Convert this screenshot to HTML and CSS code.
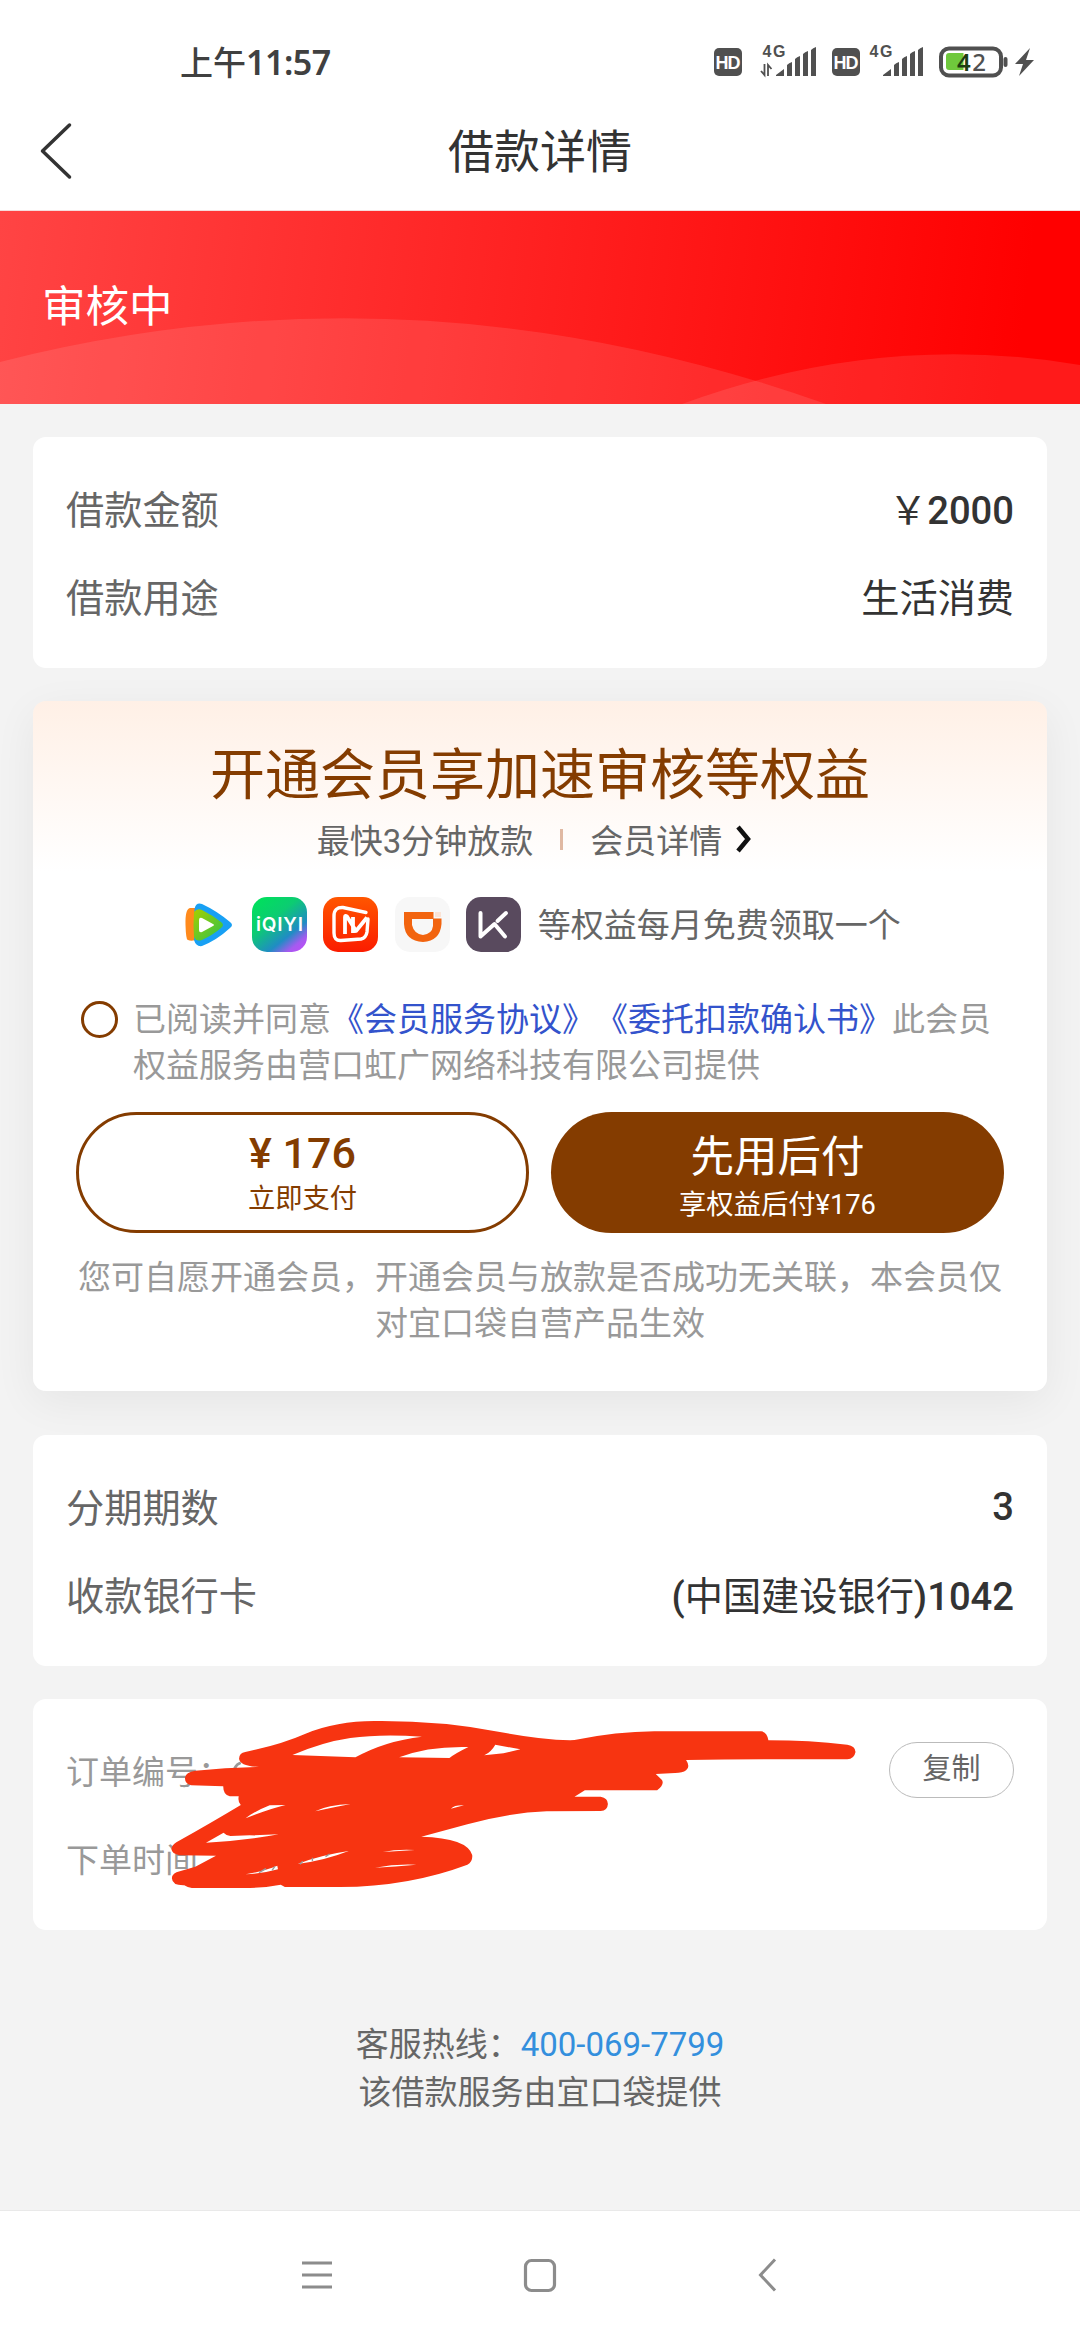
FILE: index.html
```html
<!DOCTYPE html>
<html lang="zh-CN">
<head>
<meta charset="utf-8">
<title>借款详情</title>
<link rel="stylesheet" href="styles.css">
</head>
<body>
<div class="screen">
  <header class="top">
    <div class="status">
      <span class="clock">上午<span class="clock-num">11:57</span></span>
      <svg class="status-icons" width="330" height="40" viewBox="710 40 330 40">
        <g fill="#505050">
          <rect x="714" y="48" width="28" height="28" rx="5"/>
          <rect x="832" y="48" width="28" height="28" rx="5"/>
          <g id="bars">
            <path d="M776 76v-1l8-6v7zM787 76V65q2-2 5-3v14zM795 76V59q2-2 5-3v20zM803 76V54q2-2 5-3v25zM811 76V50q2-2 5-3v29z"/>
          </g>
          <use href="#bars" x="107"/>
          <rect x="1003.500" y="57" width="4" height="10" rx="2"/>
          <path d="M1030 48l-15 16h8l-4 12 15-16h-8z"/>
        </g>
        <path d="M764.500 64v11l-3.500-4M768 76V65l3.500 4" fill="none" stroke="#505050" stroke-width="1.800"/>
        <rect x="941" y="48.500" width="60" height="27" rx="8" fill="#fff" stroke="#505050" stroke-width="4"/>
        <path d="M949 53h14.500v17H949q-3 0-3-3V56q0-3 3-3z" fill="#6fc83c"/>
        <g class="hd"><text x="715.500" y="69" textLength="25">HD</text><text x="833.500" y="69" textLength="25">HD</text></g>
        <g class="net"><text x="762.500" y="57" textLength="23">4G</text><text x="869.500" y="57" textLength="23">4G</text></g>
        <text class="bat" x="957" y="71"><tspan fill="#1d3c10" font-weight="600">4</tspan><tspan dx="1.500">2</tspan></text>
      </svg>
    </div>
    <div class="titlebar">
      <svg class="back" width="36" height="60" viewBox="0 0 36 60"><path d="M31.500 3L4.500 29l27 26" fill="none" stroke="#333" stroke-width="3.500" stroke-linecap="round" stroke-linejoin="round"/></svg>
      <h1 class="title">借款详情</h1>
    </div>
  </header>

  <section class="banner">
    <svg class="waves" width="1080" height="193" viewBox="0 211 1080 193">
      <path d="M0 362Q413 257 826 404H0z" fill="#fff" fill-opacity=".1"/>
      <path d="M682 404Q881 331 1080 365V404z" fill="#fff" fill-opacity=".1"/>
    </svg>
    <span class="state">审核中</span>
  </section>

  <main class="content">
    <section class="card">
      <div class="row"><span class="label">借款金额</span><span class="value"><span class="cn">￥</span>2000</span></div>
      <div class="row"><span class="label">借款用途</span><span class="value"><span class="cn">生活消费</span></span></div>
    </section>

    <section class="vip">
      <h2 class="vip-title">开通会员享加速审核等权益</h2>
      <div class="vip-sub">
        <span>最快3分钟放款</span><i class="bar"></i><span>会员详情</span>
        <svg width="18" height="30" viewBox="0 0 18 30"><path d="M3 3l10 12L3 27" fill="none" stroke="#111" stroke-width="4.500"/></svg>
      </div>
      <div class="perks">
        <svg class="logo-play" width="50" height="56" viewBox="0 0 50 56">
          <defs><linearGradient id="gr" x1="0" y1="0" x2="1" y2="1"><stop offset="0" stop-color="#a5cf00"/><stop offset="1" stop-color="#2fc24a"/></linearGradient></defs>
          <path d="M6 11Q1 12 1.500 28T4 43Q8 45 14 42V11z" fill="#ff8a1c"/>
          <path d="M10.500 12Q12 5 18 7 33 14 46 25q4 3 0 6Q33 43 18 49q-6 1-8-6z" fill="#18a0f4"/>
          <path d="M10 15q3-4 8-2 10 5 19 12 4 3 0 6Q29 38 18 43q-6 2-8-3Q9 28 10 15z" fill="url(#gr)"/>
          <path d="M15 23q0-3 3-2l11 6q2 1 0 2l-11 6q-3 1-3-2z" fill="#fff"/>
        </svg>
        <svg class="logo" width="55" height="55" viewBox="0 0 55 55">
          <defs><linearGradient id="iq" x1=".15" y1="0" x2=".95" y2="1"><stop offset="0" stop-color="#00e05c"/><stop offset=".35" stop-color="#0ccc72"/><stop offset=".68" stop-color="#208cc4"/><stop offset=".85" stop-color="#a65af0"/><stop offset="1" stop-color="#c04cf8"/></linearGradient></defs>
          <rect width="55" height="55" rx="15" fill="url(#iq)"/>
          <text class="iq" x="4" y="34" textLength="47">iQIYI</text>
        </svg>
        <svg class="logo" width="55" height="55" viewBox="0 0 55 55">
          <defs><linearGradient id="mg" x1="0" y1="0" x2="0" y2="1"><stop offset="0" stop-color="#ff5600"/><stop offset="1" stop-color="#fb1c00"/></linearGradient></defs>
          <rect width="55" height="55" rx="15" fill="url(#mg)"/>
          <path d="M43 15.500L20 10.500Q11 10 11 19V36Q11 44 18 43.500L38 42Q43 41 44 35L45 22" fill="none" stroke="#fff" stroke-width="3.400" stroke-linecap="round"/>
          <path d="M22 37V20q0-2 2-.5L33 34 44 20.500M30 36V20" fill="none" stroke="#fff" stroke-width="3.800" stroke-linejoin="round"/>
        </svg>
        <svg class="logo" width="55" height="55" viewBox="0 0 55 55">
          <rect width="55" height="55" rx="15" fill="#f7f7f7"/>
          <path d="M9 15H38.500v6.500H46.500V27Q45 44 28 45 10 44 9 27zM17 22V28q2 9 11 10 9-1 10-9V22z" fill="#f2640f" fill-rule="evenodd"/>
          <path d="M40 15h6v5h-6z" fill="#fbe3d5"/>
        </svg>
        <svg class="logo" width="55" height="55" viewBox="0 0 55 55">
          <rect width="55" height="55" rx="15" fill="#594a5e"/>
          <path d="M14.500 16V39.500L28.500 27 39 39.500M40 16L31.500 24" fill="none" stroke="#fff" stroke-width="4" stroke-linecap="round" stroke-linejoin="round"/>
        </svg>
        <span class="perks-text">等权益每月免费领取一个</span>
      </div>
      <div class="agree">
        <i class="radio"></i>
        <p class="agree-text">已阅读并同意<a class="doc">《会员服务协议》</a><a class="doc">《委托扣款确认书》</a>此会员<br>权益服务由营口虹广网络科技有限公司提供</p>
      </div>
      <div class="buttons">
        <div class="btn btn-line"><span class="price">¥ 176</span><span class="btn-note">立即支付</span></div>
        <div class="btn btn-fill"><span class="later">先用后付</span><span class="btn-note">享权益后付¥176</span></div>
      </div>
      <p class="notice">您可自愿开通会员，开通会员与放款是否成功无关联，本会员仅对宜口袋自营产品生效</p>
    </section>

    <section class="card">
      <div class="row"><span class="label">分期期数</span><span class="value value-num">3</span></div>
      <div class="row"><span class="label">收款银行卡</span><span class="value">(<span class="cn">中国建设银行</span>)1042</span></div>
    </section>

    <section class="card order">
      <div class="row"><span class="meta">订单编号：</span><span class="copy">复制</span></div>
      <div class="row"><span class="meta">下单时间</span></div>
      <svg class="scribble" width="1014" height="231" viewBox="0 0 1014 231">
        <g transform="translate(-3 -9) scale(.3444 .3333)">
          <path d="M594 235Q600 222 612 218M1755 250Q1765 282 1786 283Q1806 280 1805 250" fill="none" stroke="#999" stroke-width="8"/>
          <path fill="#f73411" fill-rule="evenodd" d="M625 186Q730 163 800 131Q890 93 1000 93Q1190 91 1360 125Q1480 149 1568 151L1581 150Q1703 125 1813 124H2123Q2140 126 2144 151Q2263 151 2373 164Q2397 168 2397 186Q2393 207 2373 208Q2123 207 1905 210Q1918 230 1905 241Q1895 249 1873 249L1817 252L1835 270Q1843 283 1821 301H1611L1581 320H1657Q1678 324 1678 342Q1677 362 1657 363L1500 364Q1390 368 1270 403L1136 440Q1270 444 1284 495Q1286 515 1270 524Q1100 590 900 591H740L728 584Q680 594 620 594H470Q457 593 448 586Q413 587 412 565Q413 548 435 544L480 530L540 497L435 496Q410 491 411 476Q412 465 425 457Q530 396 612 345Q603 337 606 319H580Q561 315 561 289L468 286Q449 280 450 263Q452 246 480 242Q570 233 665 231Q609 228 607 206Q608 188 625 186Z
            M762 195L945 202Q1030 153 1138 140Q1020 131 930 144Q850 156 762 195Z
            M1072 202L1218 204Q1235 190 1273 171Q1155 168 1072 202Z
            M1319 196Q1340 185 1351 164L1424 178L1375 190Z
            M626 385Q650 365 696 346L742 345Q700 355 626 385Z
            M828 364Q865 344 931 342Q880 352 828 364Z
            M1222 356Q1232 345 1260 346Z
            M511 458L562 428Q570 437 582 438L722 433Q620 453 511 458Z
            M626 553Q680 543 718 527L720 538Q680 550 626 553Z
            M777 522Q840 496 925 483Q860 510 777 522Z
            M1025 486Q1065 477 1118 480Z
            M1002 533Q1060 521 1122 524Q1060 530 1002 533Z"/>
          <path d="M665 548l20-12M703 541l8-12M784 523l8-9M820 513v-10M858 500l12-8" stroke="#999" stroke-width="4"/>
        </g>
      </svg>
    </section>

    <footer class="foot">
      <p>客服热线：<a class="tel">400-069-7799</a></p>
      <p>该借款服务由宜口袋提供</p>
    </footer>
  </main>

  <nav class="nav">
    <svg width="40" height="40" viewBox="0 0 40 40"><path d="M6 8h30M6 20h30M6 32h30" stroke="#8c8c8c" stroke-width="3"/></svg>
    <svg width="40" height="40" viewBox="0 0 40 40"><rect x="5.500" y="5.500" width="29" height="30" rx="6" fill="none" stroke="#8c8c8c" stroke-width="3.200"/></svg>
    <svg width="40" height="40" viewBox="0 0 40 40"><path d="M31 4.500L16.500 20 31 35.500" fill="none" stroke="#8c8c8c" stroke-width="3"/></svg>
  </nav>
</div>
</body>
</html>
```
FILE: styles.css
```css
* { box-sizing: border-box; margin: 0; padding: 0; }
body {
  width: 1080px;
  background: #f3f3f3;
  font-family: Roboto, "Noto Sans CJK SC", sans-serif;
  color: #333;
  text-spacing-trim: space-all;
}
i { font-style: normal; }
.screen { display: flex; flex-direction: column; height: 2340px; overflow: hidden; }

.top { height: 211px; background: #fff; border-bottom: 1px solid #f5dcdc; }
.status { display: flex; justify-content: space-between; height: 104px; padding: 40px 40px 0 180px; }
.clock { margin-top: -2px; font: 500 33px/46px "Noto Sans CJK SC", sans-serif; color: #404040; }
.clock-num { font-family: "Noto Sans", sans-serif; font-weight: 600; font-size: 34px; letter-spacing: -.5px; }
.hd { font: 700 18px "Liberation Sans", sans-serif; fill: #fff; }
.net { font: 700 16px "Liberation Sans", sans-serif; fill: #505050; }
.bat { font: 500 24px "Noto Sans", sans-serif; fill: #505050; }
.titlebar { display: grid; grid-template-columns: 1fr auto 1fr; align-items: center; height: 96px; padding: 0 38px; }
.title { grid-column: 2; font-weight: 400; font-size: 46px; line-height: 60px; }

.banner {
  position: relative;
  display: flex;
  align-items: center;
  height: 193px;
  padding: 0 0 9px 42px;
  background: linear-gradient(97deg, #ff4444 0%, #ff0000 94%);
}
.waves { position: absolute; left: 0; top: 0; }
.state { position: relative; font-size: 43.500px; color: #fff; }

.content { display: flex; flex-direction: column; flex: 1; padding: 33px 33px 0; }
.card { height: 231px; padding: 30px 33px 0; border-radius: 13px; background: #fff; }
.row { display: flex; align-items: center; justify-content: space-between; height: 88px; font-size: 38.200px; line-height: 54px; }
.label { color: #666; }
.value { font-weight: 500; }
.cn { font-weight: 400; }
.value-num { padding-bottom: 4px; }

.vip {
  display: flex;
  flex-direction: column;
  align-items: center;
  height: 690px;
  margin: 33px 0 44px;
  padding-top: 39px;
  border-radius: 13px;
  background: linear-gradient(#fff0e6 0, #fff 170px);
  box-shadow: 0 11px 44px rgba(0, 0, 0, .06);
}
.vip-title { font-weight: 400; font-size: 55px; line-height: 70px; color: #843c00; }
.vip-sub { display: flex; align-items: center; height: 58px; margin-right: 10px; font-size: 33px; color: #666; }
.bar { width: 3px; height: 21px; margin: 0 27px; background: #e0b9a3; }
.vip-sub svg { margin-left: 13px; }
.perks { display: flex; align-items: center; gap: 16.500px; height: 55px; margin: 29px 0 0 5px; font-size: 33px; color: #666; }
.logo-play { margin-right: 1px; }
.iq { font: 600 19px Inter, sans-serif; fill: #fff; }
.perks-text { padding-bottom: 4px; }
.agree { display: flex; width: 924px; height: 92px; margin-top: 45px; padding-left: 3px; }
.radio { width: 37px; height: 37px; margin: 4px 15px 0 0; border: 3px solid #843c00; border-radius: 50%; }
.agree-text { flex: 1; font-size: 33px; line-height: 46px; color: #999; }
.doc { color: #3353cc; }
.buttons { display: grid; grid-template-columns: 1fr 1fr; gap: 22px; width: 928px; margin-top: 23px; }
.btn { display: flex; flex-direction: column; align-items: center; height: 121px; border-radius: 61px; }
.btn-line { padding-top: 13px; border: 3px solid #843c00; color: #843c00; }
.btn-fill { padding-top: 19px; background: #843c00; color: #fff; }
.price { font-weight: 500; font-size: 43px; line-height: 51px; }
.later { font-size: 43.500px; line-height: 54px; }
.btn-note { font-size: 27.300px; line-height: 40px; }
.notice { width: 930px; margin-top: 22px; font-size: 33px; line-height: 46px; text-align: center; color: #999; }

.order { position: relative; margin-top: 33px; }
.meta { font-size: 33px; color: #999; }
.copy { width: 125px; height: 56px; margin-bottom: 6px; border: 1.500px solid #bbb; border-radius: 28px; font-size: 29px; line-height: 53px; text-align: center; color: #666; }
.scribble { position: absolute; left: 0; top: 0; }

.foot { margin-top: 91px; font-size: 33px; line-height: 48px; text-align: center; color: #666; }
.tel { color: #338fdd; }

.nav { display: grid; grid-template-columns: 40px 40px 40px; justify-content: center; column-gap: 184px; height: 130px; padding-top: 44px; border-top: 1px solid #e9e9e9; background: #fff; }
```
